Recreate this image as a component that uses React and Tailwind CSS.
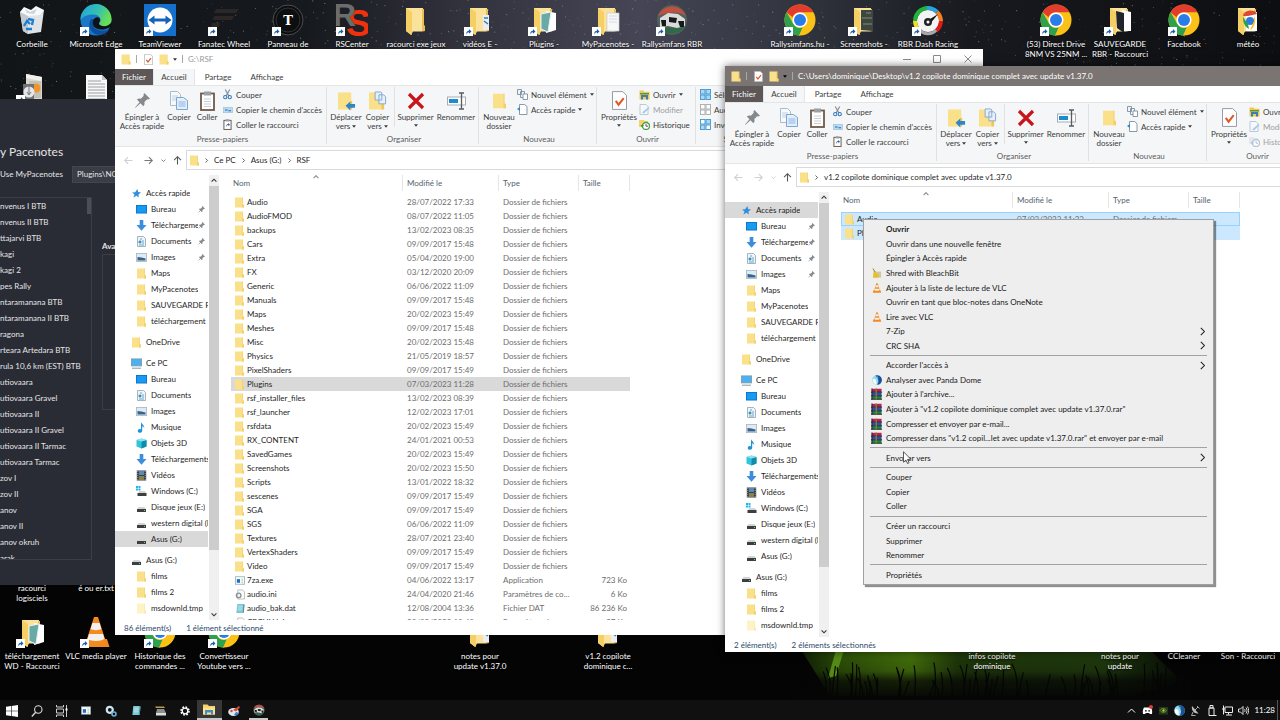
import clsx from "clsx";

const Folder = ({ className = "w-[9px] h-[11px]", pale = false }) => (
  <svg viewBox="0 0 9 11" className={clsx("shrink-0", className)}>
    <path d="M0 .5h7.400v7.200H9V10.500H0z" fill={pale ? "#fdf3c4" : "#fbe08a"} />
    <path d="M8 .5v6.500l1 .7V10.500H7.200V.5z" fill={pale ? "#f8e9ae" : "#f3cf66"} />
  </svg>
);

const BigFolder = ({ children }) => (
  <svg viewBox="0 0 32 32" className="w-8 h-8">
    <path d="M6 4h17v19h2v4l-3 .5H13L11 31 6 27z" fill="#fbe29a" />
    <path d="M6 4l6 4v23l-6-4z" fill="#f5cf63" />
    <path d="M22 5v22h3v-5l-1-1V5z" fill="#e9bf55" />
    {children}
  </svg>
);

const Shortcut = () => (
  <svg viewBox="0 0 9 9" className="absolute left-0 bottom-0 w-[9px] h-[9px]">
    <rect width="9" height="9" fill="#fff" />
    <path d="M2.300 7.600C2 5.200 3 3.700 5 3.500V2l2.500 2.400L5 6.700V5.200C3.800 5.200 2.900 6 2.300 7.600z" fill="#1d5fae" />
  </svg>
);

const Chrome = () => (
  <svg viewBox="0 0 32 32" className="w-8 h-8">
    <circle cx="16" cy="16" r="15.500" fill="#fbc116" />
    <path d="M2.600 8.200A15.500 15.500 0 0 1 29.400 8.200H16a8 8 0 0 0-7.500 5z" fill="#e33b2e" />
    <path d="M2.600 8.200 9.200 19.800A8 8 0 0 0 18.500 23.500L15.500 31.500A15.500 15.500 0 0 1 2.600 8.200z" fill="#2da14c" />
    <path d="M22.800 20 16 31.500 15 31.400 19 23.400z" fill="#fbc116" />
    <circle cx="16" cy="16" r="7.600" fill="#fff" />
    <circle cx="16" cy="16" r="6" fill="#2a7de9" />
  </svg>
);

const Bin = () => (
  <svg viewBox="0 0 32 32" className="w-8 h-8">
    <path d="M4 8 28 6 25 28 12 30 7 27z" fill="#dfe3e6" />
    <path d="M4 8 12 10 12 30 7 27z" fill="#c3c9cd" />
    <path d="M4 8l4-5 7 3 5-4 8 4-4 5-12 1z" fill="#f6f8f9" />
    <path d="M9 5l5 3 7-3-3 5-7-1z" fill="#cdd3d7" />
    <path d="M8 22l3-5 3 3M12 15l5 1-1 5M16 25l-6 0" stroke="#1c7fd0" strokeWidth="2.400" fill="none" />
  </svg>
);

const Edge = () => (
  <svg viewBox="0 0 32 32" className="w-8 h-8">
    <defs>
      <linearGradient id="edgeTop" x1="0" x2="1" y1="0" y2=".4">
        <stop offset="0" stopColor="#1ea4df" />
        <stop offset=".6" stopColor="#35c1b0" />
        <stop offset="1" stopColor="#6adf52" />
      </linearGradient>
    </defs>
    <circle cx="16" cy="16" r="15.500" fill="#1a78c8" />
    <path d="M.5 16A15.500 15.500 0 0 1 31.500 15c.3 5-4 8-9 7.500-4-.4-4-2-2.500-4 2-3-1-8-6-8C8 10.500 3 12 .5 16z" fill="url(#edgeTop)" />
    <path d="M11 15c-4 6-1 15 8 16 5 0 9-3 10.500-6-6 3-15 2-16-4-.4-3 1-5 2-6z" fill="#0d4f9c" />
    <path d="M14.500 14.500c-3 3-2 8 2 10 4 2 10 1 13.500-1.500l1 .5 1-5.500c-3 4-8 5-11 3.500-3-1-2-3-1-4.500 1-3-3-5-5.500-2.500z" fill="#101316" />
  </svg>
);

const TeamViewer = () => (
  <svg viewBox="0 0 32 32" className="w-8 h-8">
    <rect width="32" height="32" fill="#1570cd" />
    <circle cx="16" cy="16" r="12.500" fill="#fff" />
    <path d="M4.500 16l6-4.500v3h11v-3l6 4.500-6 4.500v-3h-11v3z" fill="#1464b8" />
  </svg>
);

const Fanatec = () => (
  <svg viewBox="0 0 32 32" className="w-8 h-8">
    <path d="M8 5h23l-3 4H6zM6 12h20l-2 4H5zM4 19h8l-1 4H3z" fill="#2b2727" />
  </svg>
);

const WheelT = () => (
  <svg viewBox="0 0 32 32" className="w-8 h-8">
    <circle cx="16" cy="16" r="15" fill="#0d0e10" stroke="#4c4e50" />
    <circle cx="16" cy="16" r="12" fill="none" stroke="#303234" />
    <text x="16" y="21" textAnchor="middle" fontSize="13" fontWeight="bold" fontFamily="DejaVu Serif, serif" fill="#fff">T</text>
  </svg>
);

const RsCenter = () => (
  <svg viewBox="0 0 32 32" className="w-8 h-8">
    <text x="10" y="32" fontSize="37" fontWeight="bold" fontFamily="Liberation Sans, sans-serif" fill="#f0310c">S</text>
    <text x="-3" y="22" fontSize="32" fontWeight="bold" fontFamily="Liberation Sans, sans-serif" fill="#6c6c6c">R</text>
  </svg>
);

const Rally = () => (
  <svg viewBox="0 0 32 32" className="w-8 h-8">
    <circle cx="16" cy="16" r="15" fill="#55605c" />
    <path d="M2 12a15 15 0 0 1 28 0c-8-5-18-4-28 0z" fill="#c2503f" />
    <path d="M3 22a15 15 0 0 0 26 0c-8 3-18 3-26 0z" fill="#2e6a4a" />
    <path d="M4 14l8-5 10 1 7 5v7l-8 2-9-2-8 1z" fill="#d9dcda" />
    <path d="M5 16h5v6H6zM13 13l8 1-1 5-7-1zM22 17h6v6h-4z" fill="#17191a" />
  </svg>
);

const Dash = () => (
  <svg viewBox="0 0 32 32" className="w-8 h-8">
    <circle cx="16" cy="17" r="11" fill="#f3f3f3" />
    <g fill="none" strokeWidth="4">
      <path d="M3 17A13 13 0 0 1 15 4" stroke="#20b43c" />
      <path d="M15 4a13 13 0 0 1 10 4" stroke="#27a3e0" />
      <path d="M25 8a13 13 0 0 1 4 9" stroke="#f08020" />
      <path d="M29 17a13 13 0 0 1-5 10" stroke="#e01818" />
      <path d="M3 17a13 13 0 0 0 3 8" stroke="#f2e020" />
    </g>
    <path d="M8 26c4 5 12 5 16 0" stroke="#a8a8a8" strokeWidth="3" fill="none" />
    <path d="M15 17l11-7-8 10z" fill="#111" />
    <circle cx="16" cy="18" r="4" fill="#222" />
    <circle cx="16" cy="18" r="1.500" fill="#fff" />
  </svg>
);

const Cone = ({ className = "w-8 h-8" }) => (
  <svg viewBox="0 0 32 32" className={clsx("shrink-0", className)}>
    <path d="M5 23h22l2.500 8h-27z" fill="#f18a1c" />
    <path d="M14 1h4l8 25c-5 3-15 3-20 0z" fill="#f58a1f" />
    <path d="M12.400 7h7.200l1.800 6c-3 1.500-8 1.500-10.800 0zM9 18h14l1.500 5c-4 2.500-13 2.500-17 0z" fill="#f3f1ee" />
  </svg>
);

const TextFile = () => (
  <svg viewBox="0 0 32 32" className="w-8 h-8">
    <path d="M6 3h16l5 5v24H6z" fill="#f8f8f8" />
    <path d="M22 3v5h5z" fill="#c4c4c4" />
    <path d="M8 9h13M8 12h17M8 15h17M8 18h17M8 21h17M8 24h17M8 27h17" stroke="#9aa0a4" />
  </svg>
);

const Installer = () => (
  <svg viewBox="0 0 32 32" className="w-8 h-8">
    <path d="M10 2l16 3v23H10z" fill="#d9d6ce" />
    <path d="M10 2l16 3-1 4-15-3z" fill="#f2f1ec" />
    <path d="M13 9h12v17H13z" fill="#c4c1b8" />
    <circle cx="20" cy="16" r="4.500" fill="#f0952c" />
    <path d="M7 12h11v18H7z" fill="#6e7275" />
    <circle cx="13" cy="20" r="5.500" fill="#e4e6e8" />
    <path d="M13 14v8M11 20l2 3 2-3" stroke="#777" fill="none" />
  </svg>
);

const FolderDoc = () => (
  <BigFolder>
    <path d="M15 9h12v18H15z" fill="#f6f7f8" stroke="#c9cdd0" strokeWidth=".7" />
    <path d="M17 12h8M17 15h8M17 18h8" stroke="#d7dbdf" />
  </BigFolder>
);
const FolderPhoto = () => (
  <BigFolder>
    <path d="M18 7l10 2v17l-10 3z" fill="#fff" />
    <path d="M13 10l10-2-3 20-7-3z" fill="#67aaa8" stroke="#eee" />
  </BigFolder>
);
const FolderClip = () => (
  <BigFolder>
    <path d="M19 11h6v15h-6z" fill="#e9eef2" />
    <path d="M20 14h4M20 17l4 3" stroke="#2a7bbd" strokeWidth="1.500" />
  </BigFolder>
);
const FolderShots = () => (
  <BigFolder>
    <path d="M13 6h12v21l-12-1z" fill="#3d4740" />
    <path d="M14 14h10M15 20h9M18 9h5" stroke="#5f6b58" strokeWidth="2" />
  </BigFolder>
);
const FolderSave = () => (
  <BigFolder>
    <path d="M18 6l9 2v19h-9z" fill="#fff" />
    <path d="M12 7l8 2v20l-7-5z" fill="#22242c" />
  </BigFolder>
);
const FolderMeteo = () => (
  <BigFolder>
    <path d="M14 8h11v19H14z" fill="#fff" />
    <path d="M11 12c0-6 12-8 14-2l-9 2z" fill="#de4a30" />
    <circle cx="18" cy="17" r="4" fill="#2c7be0" />
    <path d="M11 13c0 8 3 10 6 12l-1-5z" fill="#2da14c" />
    <path d="M22 12c3 5 0 12-4 14l4-9z" fill="#fbc116" />
  </BigFolder>
);

const desktopIcons = [
  { col: 1, row: 1, label: "Corbeille", Icon: Bin },
  { col: 2, row: 1, label: "Microsoft Edge", Icon: Edge, link: true },
  { col: 3, row: 1, label: "TeamViewer", Icon: TeamViewer, link: true },
  { col: 4, row: 1, label: "Fanatec Wheel", Icon: Fanatec, link: true },
  { col: 5, row: 1, label: "Panneau de", Icon: WheelT, link: true },
  { col: 6, row: 1, label: "RSCenter", Icon: RsCenter, link: true },
  { col: 7, row: 1, label: "racourci exe jeux", Icon: BigFolder },
  { col: 8, row: 1, label: "vidéos E -", Icon: FolderClip, link: true },
  { col: 9, row: 1, label: "Plugins -", Icon: FolderPhoto, link: true },
  { col: 10, row: 1, label: "MyPacenotes -", Icon: FolderDoc, link: true },
  { col: 11, row: 1, label: "Rallysimfans RBR", Icon: Rally, link: true },
  { col: 13, row: 1, label: "Rallysimfans.hu -", Icon: Chrome, link: true },
  { col: 14, row: 1, label: "Screenshots -", Icon: FolderShots, link: true },
  { col: 15, row: 1, label: "RBR Dash Racing", Icon: Dash, link: true },
  { col: 17, row: 1, label: "(53) Direct Drive\n8NM VS 25NM ...", Icon: Chrome, link: true },
  { col: 18, row: 1, label: "SAUVEGARDE\nRBR - Raccourci", Icon: FolderSave, link: true },
  { col: 19, row: 1, label: "Facebook", Icon: Chrome, link: true },
  { col: 20, row: 1, label: "météo", Icon: FolderMeteo },
  { col: 1, row: 2, label: "", Icon: Installer, link: true },
  { col: 2, row: 2, label: "", Icon: TextFile },
  { col: 1, row: 9, label: "racourci\nlogisciels", Icon: BigFolder },
  { col: 2, row: 9, label: "é ou er.txt", Icon: TextFile },
  { col: 1, row: 10, label: "téléchargement\nWD - Raccourci", Icon: FolderPhoto, link: true },
  { col: 2, row: 10, label: "VLC media player", Icon: Cone, link: true },
  { col: 3, row: 10, label: "Historique des\ncommandes ...", Icon: Chrome, link: true },
  { col: 4, row: 10, label: "Convertisseur\nYoutube vers ...", Icon: Chrome, link: true },
  { col: 8, row: 10, label: "notes pour\nupdate v1.37.0", Icon: FolderClip },
  { col: 10, row: 10, label: "v1.2 copilote\ndominique c...", Icon: FolderClip },
  { col: 16, row: 10, label: "infos copilote\ndominique", Icon: FolderDoc },
  { col: 18, row: 10, label: "notes pour\nupdate", Icon: FolderDoc },
  { col: 19, row: 10, label: "CCleaner", Icon: BigFolder },
  { col: 20, row: 10, label: "Son - Raccourci", Icon: BigFolder },
];

// cheap deterministic noise so the sky is the same on every load
const noise = (n) => {
  const v = Math.sin(n * 12.9898) * 43758.5453;
  return v - Math.floor(v);
};

const stars = Array.from({ length: 900 }, (_, i) => ({
  x: noise(i + 1) * 1280,
  y: noise(i + 5000) * 100,
  o: 0.08 + noise(i + 9000) * 0.3,
}));

const grass = Array.from({ length: 70 }, (_, i) => {
  const x = 795 + noise(i + 70) * 390;
  const y = 662 + noise(i + 700) * 20;
  return `M${x} 698Q${x + 2} ${y + 12} ${x + noise(i) * 12 - 6} ${y}`;
}).join("");

const Wallpaper = () => (
  <svg viewBox="0 0 1280 700" preserveAspectRatio="none" className="absolute inset-0 w-full h-full">
    <defs>
      <linearGradient id="sky">
        <stop offset="0" stopColor="#111517" />
        <stop offset=".24" stopColor="#16191e" />
        <stop offset=".36" stopColor="#32323d" />
        <stop offset=".5" stopColor="#454555" />
        <stop offset=".62" stopColor="#32353f" />
        <stop offset=".76" stopColor="#17191e" />
        <stop offset="1" stopColor="#0c0e11" />
      </linearGradient>
      <linearGradient id="field">
        <stop offset="0" stopColor="#0c1c06" />
        <stop offset=".12" stopColor="#2f5208" />
        <stop offset=".3" stopColor="#46740c" />
        <stop offset=".42" stopColor="#20390a" />
        <stop offset=".8" stopColor="#203c0e" />
        <stop offset="1" stopColor="#070c05" />
      </linearGradient>
      <linearGradient id="ground" x2="0" y2="1">
        <stop offset="0" stopColor="#050505" stopOpacity="0" />
        <stop offset=".4" stopColor="#050505" stopOpacity=".2" />
        <stop offset=".6" stopColor="#050505" stopOpacity=".75" />
        <stop offset="1" stopColor="#050505" />
      </linearGradient>
    </defs>
    <rect width="1280" height="700" fill="#040404" />
    <rect width="1280" height="300" fill="url(#sky)" />
    {stars.map((s, i) => (
      <circle key={i} cx={s.x} cy={s.y} r=".6" fill="#fff" opacity={s.o} />
    ))}
    <path d="M795 640h345l42 42-50 14H830z" fill="url(#field)" />
    <rect x="790" y="652" width="400" height="48" fill="url(#ground)" />
    <path d="M836 650h8l-8 26-8 2z" fill="#558a16" />
    <path d={grass} stroke="#040604" strokeWidth="1.200" fill="none" />
  </svg>
);

const stages = [
  "nvenus I BTB", "nvenus II BTB", "ttajarvi BTB", "kagi", "kagi 2", "pes Rally",
  "ntaramanana BTB", "ntaramanana II BTB", "ragona", "rteara Artedara BTB",
  "rula 10,6 km (EST) BTB", "utiovaara", "utiovaara Gravel", "utiovaara II",
  "utiovaara II Gravel", "utiovaara II Tarmac", "utiovaara Tarmac", "zov I", "zov II",
  "anov", "anov II", "anov okruh", "arak",
];

const PacenotesApp = () => (
  <section className="absolute left-0 top-[99px] w-[200px] h-[486px] bg-[#2a2c35] text-[#e4e4e6] overflow-hidden">
    <h2 className="mt-[45px] text-[12px] leading-4">y Pacenotes</h2>
    <div className="mt-[5px] flex items-center h-[18px]">
      <label htmlFor="pluginDir" className="w-[72px]">Use MyPacenotes</label>
      <input
        id="pluginDir"
        defaultValue="Plugins\NGPCarMenu"
        className="flex-1 h-[17px] px-[4px] bg-[#3a3c46] border border-[#44464f] outline-none"
      />
    </div>
    <div className="mt-[14px] flex gap-[10px]">
      <div className="flex w-[92px] h-[363px] border border-l-0 border-[#3b3d47] overflow-hidden">
        <ul className="flex-1 whitespace-nowrap">
          {stages.map((s) => (
            <li key={s} className="h-4 leading-4">{s}</li>
          ))}
        </ul>
        <div className="w-[4px] h-[16px] bg-[#4b4d58]" />
      </div>
      <div className="flex-1">
        <p className="mt-[41px] h-4 leading-4 font-bold">Available</p>
        <div className="h-[156px] border border-[#3b3d47]" />
      </div>
    </div>
  </section>
);

// navigation pane icons
const Star = () => (
  <svg viewBox="0 0 10 10" className="w-[9px] h-[9px] shrink-0">
    <path d="M6 0l.8 3.300L10 4 7.200 6l.3 3.500L5 7.500 1.500 9.500 2.800 6 0 4l3.500-.3z" fill="#2f8fdc" />
  </svg>
);
const Monitor = () => (
  <svg viewBox="0 0 11 9" className="w-[11px] h-[9px] shrink-0">
    <rect width="11" height="8.500" fill="#0f6fc6" />
    <rect x=".8" y=".8" width="9.400" height="6.800" fill="#169bf2" />
  </svg>
);
const Down = () => (
  <svg viewBox="0 0 11 11" className="w-[11px] h-[11px] shrink-0">
    <path d="M3.700 0h3.600v5H10.500L5.500 10.800.5 5h3.200z" fill="#3c8edb" />
  </svg>
);
const Doc = () => (
  <svg viewBox="0 0 11 11" className="w-[11px] h-[11px] shrink-0">
    <path d="M1.500.5h6l2 2v8h-8z" fill="#eef4f8" stroke="#8fa3b0" strokeWidth=".8" />
    <path d="M3 5h2v2H3zM6 5h2M6 7h2M3 9h5M4 3h2" stroke="#3f93bd" fill="#3f93bd" strokeWidth=".8" />
  </svg>
);
const Pic = () => (
  <svg viewBox="0 0 11 9" className="w-[11px] h-[9px] shrink-0">
    <rect x=".4" y=".4" width="10.200" height="8.200" fill="#dcebf6" stroke="#a5b4bf" strokeWidth=".8" />
    <path d="M1.500 4l4 .5 4 1v2h-8z" fill="#3a6386" />
  </svg>
);
const Note = () => (
  <svg viewBox="0 0 11 11" className="w-[11px] h-[11px] shrink-0">
    <path d="M5 0c.5 2 3.500 3 3.200 6.500C7.800 5 7 4.500 6.200 4.300V9A2.200 1.800 0 1 1 5 7.300z" fill="#1e93d6" />
  </svg>
);
const Cube = () => (
  <svg viewBox="0 0 11 11" className="w-[11px] h-[11px] shrink-0">
    <path d="M.5 2l5-1.500 5 1.500v6.500l-5 2-5-2z" fill="#35c3dc" />
    <path d="M5.500 3.500L10.500 2v6.500l-5 2z" fill="#118ba8" />
    <path d="M.5 2l5-1.500 5 1.500-5 1.500z" fill="#8be4f2" />
  </svg>
);
const Film = () => (
  <svg viewBox="0 0 11 11" className="w-[11px] h-[11px] shrink-0">
    <rect x=".8" y=".5" width="9.400" height="10" fill="#3a4048" />
    <path d="M3 1h5v4H3z" fill="#5989b4" />
    <path d="M3 6h5v4H3z" fill="#87814c" />
    <path d="M1.800 1v9M9.200 1v9" stroke="#c8ccd0" strokeWidth=".7" strokeDasharray="1 1" />
  </svg>
);
const Disk = () => (
  <svg viewBox="0 0 11 11" className="w-[11px] h-[11px] shrink-0">
    <path d="M2.500 5h6l1.500 2H1z" fill="#d3d5d7" />
    <rect x="1" y="7" width="9" height="3" fill="#3b3f42" />
    <rect x="8" y="8" width="1" height="1" fill="#72d272" />
  </svg>
);
const WinDisk = () => (
  <svg viewBox="0 0 11 11" className="w-[11px] h-[11px] shrink-0">
    <path d="M0 0h2v2H0zM2.500 0h2v2h-2zM0 2.500h2v2H0zM2.500 2.500h2v2h-2z" fill="#23b4e8" />
    <path d="M3 5h6l1.500 2.500H2z" fill="#d3d5d7" />
    <rect x="1.500" y="7" width="9" height="3" fill="#3b3f42" />
  </svg>
);
const Computer = () => (
  <svg viewBox="0 0 11 11" className="w-[11px] h-[11px] shrink-0">
    <rect x=".4" y=".9" width="10.200" height="7" fill="#4ab2f0" stroke="#7f98a8" strokeWidth=".8" />
    <path d="M1 10.200h9" stroke="#8798a4" />
  </svg>
);
const Pin = ({ className = "w-[7px] h-[7px]" }) => (
  <svg viewBox="0 0 16 16" className={clsx("shrink-0", className)}>
    <path d="M10 0l6 6-2 1-1-.3-3 3c.5 2 0 3.500-1 4.300L5.800 10.800.5 15.700 0 15.500 4.800 9.800 2 7c1-1 2.500-1.500 4.300-1l3-3L9 1.500z" fill="#84898e" />
  </svg>
);

const navItems = [
  { label: "Accès rapide", Icon: Star, root: true },
  { label: "Bureau", Icon: Monitor, pin: true },
  { label: "Téléchargements", Icon: Down, pin: true },
  { label: "Documents", Icon: Doc, pin: true },
  { label: "Images", Icon: Pic, pin: true },
  { label: "Maps", Icon: Folder },
  { label: "MyPacenotes", Icon: Folder },
  { label: "SAUVEGARDE RBR", Icon: Folder },
  { label: "téléchargement", Icon: Folder },
  { label: "OneDrive", Icon: Folder, root: true, gap: true },
  { label: "Ce PC", Icon: Computer, root: true, gap: true },
  { label: "Bureau", Icon: Monitor },
  { label: "Documents", Icon: Doc },
  { label: "Images", Icon: Pic },
  { label: "Musique", Icon: Note },
  { label: "Objets 3D", Icon: Cube },
  { label: "Téléchargements", Icon: Down },
  { label: "Vidéos", Icon: Film },
  { label: "Windows (C:)", Icon: WinDisk },
  { label: "Disque jeux (E:)", Icon: Disk },
  { label: "western digital (F:)", Icon: Disk },
  { label: "Asus (G:)", Icon: Disk },
  { label: "Asus (G:)", Icon: Disk, root: true, gap: true },
  { label: "films", Icon: Folder },
  { label: "films 2", Icon: Folder },
  { label: "msdownld.tmp", Icon: Folder, pale: true },
];

const NavPane = ({ selected }) => (
  <nav className="flex w-[104px] shrink-0 overflow-hidden">
    <ul className="w-[93px] pt-[10px]">
      {navItems.map(({ label, Icon, root, gap, pin, pale }, i) => (
        <li
          key={i}
          className={clsx(
            "h-4 flex items-center overflow-hidden whitespace-nowrap",
            root ? "pl-[16px]" : "pl-[21px]",
            gap && "mt-[5px]",
            i === selected && "bg-[#d9d9d9]"
          )}
        >
          <span className="w-[11px] flex justify-center shrink-0">
            {pale ? <Folder pale /> : <Icon />}
          </span>
          <span className={clsx("pl-[4px] overflow-hidden", pin && "w-[51px]")}>{label}</span>
          {pin && <Pin />}
        </li>
      ))}
    </ul>
    <div className="w-[10px] ml-[1px] bg-[#f0f0f0] flex flex-col items-center">
      <Chevron className="w-[6px] h-[11px] rotate-180 text-[#333]" />
      <div className="w-full h-[364px] bg-[#cdcdcd]" />
      <Chevron className="mt-auto w-[6px] h-[11px] text-[#333]" />
    </div>
  </nav>
);

const Chevron = ({ className, thin }) => (
  <svg viewBox="0 0 8 8" className={className}>
    <path d="M.8 2.500 4 5.700 7.200 2.500" fill="none" stroke="currentColor" strokeWidth={thin ? 0.9 : 1.5} />
  </svg>
);

const Caret = ({ className }) => (
  <svg viewBox="0 0 6 4" className={clsx("inline-block w-[4px] h-[3px] shrink-0", className)}>
    <path d="M0 0h6L3 4z" fill="currentColor" />
  </svg>
);

const CheckDoc = ({ className }) => (
  <svg viewBox="0 0 16 20" className={className}>
    <path d="M.5.5h11l4 4v15H.5z" fill="#fff" stroke="#8e959a" />
    <path d="M4 10.500l3 4 5.500-7" fill="none" stroke="#e0592a" strokeWidth="2.200" />
  </svg>
);

// ribbon icons
const CopyIcon = () => (
  <svg viewBox="0 0 18 20" className="w-[18px] h-[20px]">
    <path d="M.5.5h7l3 3v11H.5z" fill="#f7fafd" stroke="#a9bccb" />
    <path d="M2 5h6M2 7h6M2 9h6" stroke="#bcd0e2" />
    <path d="M6.500 6.500h7l4 3v9h-11z" fill="#e3eefb" stroke="#7fa6cf" />
    <path d="M8.500 11h7M8.500 13h7M8.500 15h7" stroke="#8fb5e6" />
  </svg>
);
const PasteIcon = ({ className = "w-[15px] h-[20px]", link = false }) => (
  <svg viewBox="0 0 15 20" className={className}>
    <rect x="1" y="2.500" width="13" height="16.500" fill="#fff" stroke="#6e5a4b" strokeWidth="1.800" />
    <rect x="4" y=".5" width="7" height="4" fill="#9aa0a5" />
    {link ? (
      <path d="M5 15c0-4 1-6 4-6V7l3 3.500L9 13v-2c-2 0-3 1-4 4z" fill="#2566b4" />
    ) : (
      <path d="M4 8h7M4 10.500h7M4 13h7M4 15.500h7" stroke="#c8ced3" />
    )}
  </svg>
);
const Scissors = () => (
  <svg viewBox="0 0 10 11" className="w-[9px] h-[11px]">
    <path d="M2.500 0l4 7M7.500 0l-4 7" stroke="#8a9299" strokeWidth="1.300" />
    <circle cx="2.500" cy="8.500" r="1.800" fill="none" stroke="#2f78c0" strokeWidth="1.200" />
    <circle cx="7.500" cy="8.500" r="1.800" fill="none" stroke="#2f78c0" strokeWidth="1.200" />
  </svg>
);
const PathIcon = () => (
  <svg viewBox="0 0 11 7" className="w-[10px] h-[6px]">
    <rect x=".4" y=".4" width="10.200" height="6.200" fill="#b8dcf3" stroke="#9cc0d8" strokeWidth=".8" />
    <path d="M2 3.500h3M6 4.500h3" stroke="#2268a8" fill="none" strokeWidth="1.200" />
  </svg>
);
const MoveTo = () => (
  <svg viewBox="0 0 20 20" className="w-[19px] h-[20px]">
    <path d="M1 1h14v18H1z" fill="#fbe08a" />
    <path d="M14 10h2v9h-2z" fill="#efc658" />
    <path d="M9 15l5-4.500v2.700h5v4h-5v2.700z" fill="#2f86c6" />
  </svg>
);
const CopyTo = () => (
  <svg viewBox="0 0 20 20" className="w-[19px] h-[20px]">
    <path d="M1 1h13v18H1z" fill="#fbe08a" />
    <path d="M14 10h3v9h-3z" fill="#efc658" />
    <path d="M7.500.5h6l1 1V9h-7zM11.500 3.500h5l2 2V13h-7z" fill="#e6f0fb" stroke="#84a8cc" />
  </svg>
);
const Cross = () => (
  <svg viewBox="0 0 18 18" className="w-[18px] h-[18px]">
    <path d="M2 2l14 14M16 2 2 16" stroke="#c8151b" strokeWidth="3.200" />
  </svg>
);
const Rename = () => (
  <svg viewBox="0 0 19 18" className="w-[19px] h-[18px]">
    <rect x=".5" y="5" width="18" height="8" fill="#fff" stroke="#a3adb5" />
    <rect x="2" y="7" width="9" height="4" fill="#1f8ad0" />
    <path d="M12 1h5M12 17h5M14.500 1v16" stroke="#565c61" strokeWidth="1.300" />
  </svg>
);
const NewItem = () => (
  <svg viewBox="0 0 11 11" className="w-[11px] h-[11px]">
    <path d="M.5.5h4v5h-4zM3.500 2.500h4v6h-4z" fill="#eef5fb" stroke="#7d8f9e" strokeWidth=".9" />
    <path d="M6 5h4.500v5.500H6z" fill="#fff" stroke="#7d8f9e" strokeWidth=".9" />
  </svg>
);
const EasyAccess = () => (
  <svg viewBox="0 0 11 11" className="w-[11px] h-[11px]">
    <path d="M2.500.5h5l2.500 2v8H2.500z" fill="#fff" stroke="#7d8f9e" strokeWidth=".9" />
    <path d="M0 5l3-2v4z" fill="#2f86c6" />
  </svg>
);
const OpenIcon = () => (
  <svg viewBox="0 0 11 10" className="w-[11px] h-[10px]">
    <path d="M.5.5h4l1 1.200h5V9.500H.5z" fill="#f3c84b" />
    <path d="M2 5h7v4.500H7V7H4v2.500H2z" fill="#3a7fb7" />
    <path d="M1 3h9v1.500H1z" fill="#4c9a57" />
  </svg>
);
const EditIcon = () => (
  <svg viewBox="0 0 11 11" className="w-[11px] h-[11px]">
    <path d="M1 .5h6l2 2v8H1z" fill="#f6f9fc" stroke="#b4c4d2" strokeWidth=".9" />
    <path d="M3 8.500 9.500 3l1 1L5 9.500z" fill="#a9c9e6" />
  </svg>
);
const HistoryIcon = ({ dim }) => (
  <svg viewBox="0 0 11 11" className="w-[11px] h-[11px]">
    <path d="M0 1h5l1 1h3v6H0z" fill={dim ? "#e4e8ec" : "#f3d36a"} />
    <circle cx="7" cy="7" r="3.500" fill="#fff" stroke={dim ? "#b3c3d8" : "#4a9e4a"} strokeWidth="1.300" />
    <path d="M7 5v2.200h2" stroke={dim ? "#9db2cc" : "#333"} fill="none" strokeWidth=".8" />
    <path d="M1.500 6 5 6 3.200 9z" fill={dim ? "#b3c3d8" : "#3c9f3c"} />
  </svg>
);
const SelectIcon = ({ kind }) => {
  const on = "#a9d8f7";
  const off = "#fdfdfd";
  const fills = kind === "all" ? [on, on, on, on] : kind === "none" ? [off, off, off, off] : [off, on, on, off];
  return (
    <svg viewBox="0 0 11 11" className="w-[11px] h-[11px]">
      {fills.map((f, i) => (
        <rect
          key={i}
          x={0.5 + (i % 2) * 5.5}
          y={0.5 + Math.floor(i / 2) * 5.5}
          width="4.500"
          height="4.500"
          fill={f}
          stroke={kind === "none" ? "#a8a8a8" : "#3d96cf"}
          strokeWidth=".9"
        />
      ))}
    </svg>
  );
};

const BigButton = ({ icon, lines, caret, className }) => (
  <button className={clsx("flex flex-col items-center text-center leading-[9px]", className)}>
    <span className="h-[21px] mb-[2px] flex items-center">{icon}</span>
    {lines.map((l, i) => (
      <span key={l} className="h-[9px] whitespace-nowrap flex items-center">
        {l}
        {caret && lines.length > 1 && i === 1 && <Caret className="ml-[2px]" />}
      </span>
    ))}
    {caret && lines.length === 1 && <Caret className="mt-[2px]" />}
  </button>
);

const SmallButton = ({ icon, label, caret, dim }) => (
  <button className={clsx("flex items-center h-[15px] whitespace-nowrap", dim && "text-[#a0a0a0]")}>
    <span className="w-[11px] mr-[3px] flex justify-center">{icon}</span>
    {label}
    {caret && <Caret className="ml-[3px]" />}
  </button>
);

const Group = ({ label, className, children }) => (
  <div className={clsx("shrink-0 h-[57px] flex flex-col border-r border-[#dfe1e3]", className)}>
    <div className="flex flex-1">{children}</div>
    <div className="h-[10px] leading-[10px] text-center text-[#5c5c5c]">{label}</div>
  </div>
);

const Ribbon = ({ historyDim }) => (
  <div className="h-[62px] shrink-0 bg-[#f5f6f7] border-y border-[#e3e5e7] pt-[1px] flex text-[#3c3c3c] overflow-hidden">
    <Group label="Presse-papiers" className="w-[212px] pl-[4px]">
      <BigButton className="w-[46px] pt-[3px]" icon={<Pin className="w-[15px] h-[15px]" />} lines={["Épingler à", "Accès rapide"]} />
      <BigButton className="w-[28px] pt-[3px]" icon={<CopyIcon />} lines={["Copier"]} />
      <BigButton className="w-[28px] pt-[3px]" icon={<PasteIcon />} lines={["Coller"]} />
      <div className="ml-[1px]">
        <SmallButton icon={<Scissors />} label="Couper" />
        <SmallButton icon={<PathIcon />} label="Copier le chemin d'accès" />
        <SmallButton icon={<PasteIcon link className="w-[9px] h-[11px]" />} label="Coller le raccourci" />
      </div>
    </Group>
    <Group label="Organiser" className="w-[152px] pl-[3px]">
      <BigButton className="w-[32px] pt-[3px]" icon={<MoveTo />} lines={["Déplacer", "vers"]} caret />
      <BigButton className="w-[31px] pt-[3px] mr-[1px]" icon={<CopyTo />} lines={["Copier", "vers"]} caret />
      <div className="h-[40px] border-r border-[#dfe1e3]" />
      <BigButton className="w-[41px] pt-[3px]" icon={<Cross />} lines={["Supprimer"]} caret />
      <BigButton className="w-[40px] pt-[3px]" icon={<Rename />} lines={["Renommer"]} />
    </Group>
    <Group label="Nouveau" className="w-[118px] pl-[3px]">
      <BigButton className="w-[34px] pt-[3px]" icon={<Folder className="w-[13px] h-[18px]" />} lines={["Nouveau", "dossier"]} />
      <div className="ml-[1px]">
        <SmallButton icon={<NewItem />} label="Nouvel élément" caret />
        <SmallButton icon={<EasyAccess />} label="Accès rapide" caret />
      </div>
    </Group>
    <Group label="Ouvrir" className="w-[99px] pl-[3px]">
      <BigButton className="w-[38px] pt-[3px]" icon={<CheckDoc className="w-[15px] h-[19px]" />} lines={["Propriétés"]} caret />
      <div className="ml-[1px]">
        <SmallButton icon={<OpenIcon />} label="Ouvrir" caret />
        <SmallButton icon={<EditIcon />} label="Modifier" dim />
        <SmallButton icon={<HistoryIcon dim={historyDim} />} label="Historique" dim={historyDim} />
      </div>
    </Group>
    <Group label="Sélectionner" className="w-[96px] pl-[4px]">
      <div>
        <SmallButton icon={<SelectIcon kind="all" />} label="Sélectionner tout" />
        <SmallButton icon={<SelectIcon kind="none" />} label="Aucun" />
        <SmallButton icon={<SelectIcon kind="invert" />} label="Inverser la sélection" />
      </div>
    </Group>
  </div>
);

const Arrow = ({ className }) => (
  <svg viewBox="0 0 10 10" className={clsx("w-[9px] h-[9px]", className)}>
    <path d="M9.500 5H1M4.500 1.200.8 5l3.700 3.800" fill="none" stroke="currentColor" strokeWidth="1.200" />
  </svg>
);

const AddressBar = ({ crumbs, canForward }) => (
  <div className="h-[26px] mb-[2px] shrink-0 flex items-center">
    <button aria-label="Précédent" className="ml-[9px] text-[#d0d0d0]"><Arrow /></button>
    <button aria-label="Suivant" className={clsx("ml-[11px]", canForward ? "text-[#777]" : "text-[#d0d0d0]")}>
      <Arrow className="rotate-180" />
    </button>
    <button aria-label="Récents" className={clsx("ml-[8px]", canForward ? "text-[#777]" : "text-[#d0d0d0]")}>
      <Chevron className="w-[5px] h-[5px]" />
    </button>
    <button aria-label="Dossier parent" className="ml-[7px] text-[#555]"><Arrow className="rotate-90" /></button>
    <div className="ml-[4px] flex-1 h-[20px] border border-r-0 border-[#d9d9d9] flex items-center pl-[3px] whitespace-nowrap">
      <Folder className="w-[9px] h-[11px]" />
      {crumbs.map((c) => (
        <span key={c} className="flex items-center">
          <Chevron className="w-[5px] h-[5px] -rotate-90 mx-[5px] text-[#555]" />
          <button>{c}</button>
        </span>
      ))}
    </div>
  </div>
);

const ExeIcon = () => (
  <svg viewBox="0 0 11 9" className="w-[10px] h-[9px]">
    <rect x=".4" y=".4" width="10.200" height="8.200" fill="#fff" stroke="#8ba1b3" strokeWidth=".8" />
    <path d="M2 3h3.500v4H2z" fill="#1c6fc4" />
    <path d="M7 3h2M7 5h2M7 7h2" stroke="#7cbf6c" strokeWidth=".8" />
  </svg>
);
const IniIcon = () => (
  <svg viewBox="0 0 11 11" className="w-[10px] h-[11px]">
    <path d="M3 .5h5l2.500 2v8H3z" fill="#fafafa" stroke="#a9adb0" strokeWidth=".8" />
    <circle cx="4" cy="6.500" r="2.500" fill="none" stroke="#8e9396" strokeWidth="1.500" />
  </svg>
);
const DatIcon = () => (
  <svg viewBox="0 0 11 11" className="w-[10px] h-[11px]">
    <path d="M2.500 .5h7l1 1-1 9h-8z" fill="#7cc7d6" />
    <path d="M9.500.5l1 1-1 9-1-1z" fill="#4b8f9c" />
    <path d="M3.500 3h5M3.300 5h5M3 7h5" stroke="#d5f0f5" strokeWidth=".8" />
  </svg>
);

const dir = (name, date) => ({ name, date, type: "Dossier de fichiers" });

const rsfFiles = [
  dir("Audio", "28/07/2022 17:33"),
  dir("AudioFMOD", "08/07/2022 11:05"),
  dir("backups", "13/02/2023 08:35"),
  dir("Cars", "09/09/2017 15:48"),
  dir("Extra", "05/04/2020 19:00"),
  dir("FX", "03/12/2020 20:09"),
  dir("Generic", "06/06/2022 11:09"),
  dir("Manuals", "09/09/2017 15:48"),
  dir("Maps", "20/02/2023 15:49"),
  dir("Meshes", "09/09/2017 15:48"),
  dir("Misc", "20/02/2023 15:48"),
  dir("Physics", "21/05/2019 18:57"),
  dir("PixelShaders", "09/09/2017 15:49"),
  dir("Plugins", "07/03/2023 11:28"),
  dir("rsf_installer_files", "13/02/2023 08:39"),
  dir("rsf_launcher", "12/02/2023 17:01"),
  dir("rsfdata", "20/02/2023 15:49"),
  dir("RX_CONTENT", "24/01/2021 00:53"),
  dir("SavedGames", "20/02/2023 15:49"),
  dir("Screenshots", "20/02/2023 15:50"),
  dir("Scripts", "13/01/2022 18:32"),
  dir("sescenes", "09/09/2017 15:49"),
  dir("SGA", "09/09/2017 15:49"),
  dir("SGS", "06/06/2022 11:09"),
  dir("Textures", "28/07/2021 23:40"),
  dir("VertexShaders", "09/09/2017 15:49"),
  dir("Video", "09/09/2017 15:49"),
  { name: "7za.exe", date: "04/06/2022 13:17", type: "Application", size: "723 Ko", Icon: ExeIcon },
  { name: "audio.ini", date: "24/04/2020 21:46", type: "Paramètres de co...", size: "6 Ko", Icon: IniIcon },
  { name: "audio_bak.dat", date: "12/08/2004 13:36", type: "Fichier DAT", size: "86 236 Ko", Icon: DatIcon },
  { name: "CPCHU.ini", date: "20/02/2023 18:48", type: "Paramètres de co...", size: "27 Ko", Icon: IniIcon },
];

const copiloteFiles = [dir("Audio", "07/03/2023 11:23"), dir("Plugins", "07/03/2023 11:23")];

const FileTable = ({ files, selected, active }) => (
  <div className="relative flex-1 pl-[12px] overflow-hidden">
    <Chevron className="absolute left-[94px] top-[-1px] w-[6px] h-[6px] rotate-180 text-[#888]" />
    <table className="table-fixed w-[399px]">
      <thead>
        <tr className="text-left text-[#56636f]">
          {[
            ["Nom", "w-[172px] pl-[2px]"],
            ["Modifié le", "w-[96px] pl-[4px]"],
            ["Type", "w-[80px] pl-[4px]"],
            ["Taille", "w-[51px] pl-[4px]"],
          ].map(([h, cls]) => (
            <th key={h} className={clsx("h-5 p-0 font-normal align-top", cls)}>
              <div className="h-4 leading-4 border-r border-[#e5e5e5]">{h}</div>
            </th>
          ))}
        </tr>
      </thead>
      <tbody>
        {files.map(({ name, date, type, size, Icon }, i) => (
          <tr
            key={name}
            className={clsx(
              "h-[14px] leading-[14px] whitespace-nowrap text-[#6d6d6d]",
              selected.includes(i) && (active ? "bg-[#cce8ff]" : "bg-[#d9d9d9]"),
              active && i === 0 && "outline outline-1 -outline-offset-1 outline-[#99d1ff]"
            )}
          >
            <td className="p-0 text-[#1f1f1f]">
              <span className="flex items-center">
                <span className="w-[11px] ml-[3px] mr-[2px] flex justify-center">
                  {Icon ? <Icon /> : <Folder />}
                </span>
                {name}
              </span>
            </td>
            <td className="p-0 pl-[4px]">{date}</td>
            <td className="p-0 pl-[4px]">{type}</td>
            <td className="p-0 pr-[3px] text-right">{size}</td>
          </tr>
        ))}
      </tbody>
    </table>
  </div>
);

const Explorer = ({ title, crumbs, files, selected, navSelected, status, active, className }) => (
  <section className={clsx("absolute w-[868px] h-[586px] bg-white text-[#1f1f1f] flex flex-col overflow-hidden", className)}>
    <header
      className={clsx("h-[20px] shrink-0 flex items-center pl-[6px]", active ? "bg-[#7a7573] text-white" : "bg-white text-[#999]")}
    >
      <Folder className="w-[10px] h-[11px]" />
      <span className="ml-[5px] h-2 border-r border-[#a8a8a8]" />
      <CheckDoc className="ml-[7px] w-[9px] h-[11px]" />
      <Folder className="ml-[6px] w-[10px] h-[11px]" />
      <Caret className={clsx("ml-[4px]", active ? "text-black" : "text-[#333]")} />
      <span className="ml-[5px] h-2 border-r border-[#a8a8a8]" />
      <h1 className="ml-[5px] whitespace-nowrap">{title}</h1>
      <div className={clsx("ml-auto flex items-center", active ? "text-white" : "text-[#8a8a8a]")}>
        <button aria-label="Réduire" className="w-[30px] flex justify-center">
          <svg viewBox="0 0 8 8" className="w-2 h-2"><path d="M0 4.500h8" stroke="currentColor" /></svg>
        </button>
        <button aria-label="Agrandir" className="w-[30px] flex justify-center">
          <svg viewBox="0 0 8 8" className="w-2 h-2"><path d="M.5.5h7v7h-7z" fill="none" stroke="currentColor" /></svg>
        </button>
        <button aria-label="Fermer" className="w-[31px] flex justify-center">
          <svg viewBox="0 0 8 8" className="w-2 h-2"><path d="M.5.5l7 7M7.500.5l-7 7" stroke="currentColor" /></svg>
        </button>
      </div>
    </header>
    <div className="h-[16px] shrink-0 flex text-center text-[#3c3c3c]">
      <button className="w-[38px] bg-[#5d5857] text-white">Fichier</button>
      <button className="w-[42px] bg-[#f5f6f7] border-x border-[#e3e5e7]">Accueil</button>
      <button className="w-[46px]">Partage</button>
      <button className="w-[52px]">Affichage</button>
    </div>
    <Ribbon historyDim={active} />
    <AddressBar crumbs={crumbs} canForward={!active} />
    <div className="flex-1 min-h-0 flex">
      <NavPane selected={navSelected} />
      <FileTable files={files} selected={selected} active={active} />
    </div>
    <footer className="h-[15px] shrink-0 flex items-center gap-[15px] pl-[9px] text-[#2b4a6b]">
      {status.map((s) => (
        <span key={s}>{s}</span>
      ))}
    </footer>
  </section>
);

const WinRar = () => (
  <svg viewBox="0 0 12 12" className="w-[11px] h-[12px]">
    <rect x="1" y=".3" width="10.500" height="3.600" fill="#b32452" />
    <rect x="1" y="4.200" width="10.500" height="3.600" fill="#2c4fae" />
    <rect x="1" y="8.100" width="10.500" height="3.600" fill="#1f8a42" />
    <path d="M0 4h12M0 8h12M1 0v12M0 11.700h12" stroke="#15181c" />
    <path d="M5 0h1.500v12H5z" fill="#8f7540" />
  </svg>
);
const Panda = ({ className = "w-[10px] h-[10px]" }) => (
  <svg viewBox="0 0 12 12" className={className}>
    <circle cx="6" cy="6" r="5.800" fill="#8fdcf0" />
    <path d="M4 .6A5.800 5.800 0 1 1 6 11.800C8 9 9 5 4 .6z" fill="#1d4f96" />
    <path d="M1 5c3-1 5 1 4 6.500C2 10.500.5 8 1 5z" fill="#fff" />
    <path d="M6 1l2 3-3-1z" fill="#46b6e0" />
  </svg>
);
const Broom = () => (
  <svg viewBox="0 0 11 11" className="w-[10px] h-[10px]">
    <path d="M3 4h7v6.500H3z" fill="#cfc7a4" />
    <path d="M2 2.500l2 2.500 4 3-1 2.500-6 .2z" fill="#e3c02c" />
    <path d="M1 .5l2.500 4" stroke="#8c7b2a" />
  </svg>
);
const SmallCone = () => <Cone className="w-[10px] h-[10px]" />;

const menu = [
  [
    { label: "Ouvrir", bold: true },
    { label: "Ouvrir dans une nouvelle fenêtre" },
    { label: "Épingler à Accès rapide" },
    { label: "Shred with BleachBit", Icon: Broom },
    { label: "Ajouter à la liste de lecture de VLC", Icon: SmallCone },
    { label: "Ouvrir en tant que bloc-notes dans OneNote" },
    { label: "Lire avec VLC", Icon: SmallCone },
    { label: "7-Zip", sub: true },
    { label: "CRC SHA", sub: true },
  ],
  [
    { label: "Accorder l'accès à", sub: true },
    { label: "Analyser avec Panda Dome", Icon: Panda },
    { label: "Ajouter à l'archive...", Icon: WinRar },
    { label: 'Ajouter à "v1.2 copilote dominique complet avec update v1.37.0.rar"', Icon: WinRar },
    { label: "Compresser et envoyer par e-mail...", Icon: WinRar },
    { label: 'Compresser dans "v1.2 copil...let avec update v1.37.0.rar" et envoyer par e-mail', Icon: WinRar },
  ],
  [{ label: "Envoyer vers", sub: true }],
  [{ label: "Couper" }, { label: "Copier" }, { label: "Coller" }],
  [{ label: "Créer un raccourci" }, { label: "Supprimer" }, { label: "Renommer" }],
  [{ label: "Propriétés" }],
];

const ContextMenu = () => (
  <div
    role="menu"
    className="absolute left-[863px] top-[219px] w-[351px] h-[366px] flex flex-col px-[6px] py-[2px] bg-[#eeeeee] border border-[#a0a0a0] text-[#1a1a1a] shadow-[2px_2px_1px_#00000070]"
  >
    {menu.flatMap((group, g) => [
      g > 0 && (
        <div key={`sep${g}`} role="separator" className="h-[5px] flex items-center">
          <span className="w-full border-t border-[#a2a2a2]" />
        </div>
      ),
      ...group.map(({ label, Icon, bold, sub }) => (
        <button key={label} role="menuitem" className={clsx("flex-1 min-h-0 flex items-center text-left", bold && "font-bold")}>
          <span className="w-[13px] mr-[3px] flex justify-center">{Icon && <Icon />}</span>
          <span className="flex-1 whitespace-nowrap">{label}</span>
          {sub && <Chevron thin className="w-[9px] h-[9px] -rotate-90" />}
        </button>
      )),
    ])}
  </div>
);

const Pointer = () => (
  <svg viewBox="0 0 9 13" className="absolute left-[903px] top-[451px] w-[9px] h-[13px]">
    <path d="M.5.7v10.500l2.400-2.200 1.600 3.500 1.600-.7-1.600-3.400h3.400z" fill="#fff" stroke="#333" strokeWidth=".8" />
  </svg>
);

// taskbar icons
const WindowsLogo = () => (
  <svg viewBox="0 0 12 12" className="w-3 h-3">
    <path d="M0 1.700l5-.7v4.700H0zM5.600.9 12 0v5.700H5.600zM0 6.300h5V11l-5-.7zM5.600 6.300H12V12l-6.400-.9z" fill="#fff" />
  </svg>
);
const SearchIcon = () => (
  <svg viewBox="0 0 12 12" className="w-3 h-3">
    <circle cx="7.300" cy="4.500" r="3.700" fill="none" stroke="#ddd" strokeWidth="1.100" />
    <path d="M4.700 7.300.8 11.500" stroke="#ddd" strokeWidth="1.300" />
  </svg>
);
const TaskView = () => (
  <svg viewBox="0 0 12 12" className="w-3 h-3">
    <path d="M.5 0v2h7V0M.5 12v-2h7v2M.5 4h7v4h-7zM10.500 0v12" fill="none" stroke="#ccc" />
    <rect x="9.500" y="3.500" width="2" height="2" fill="#fff" />
  </svg>
);
const Gears = () => (
  <svg viewBox="0 0 12 12" className="w-3 h-3">
    <circle cx="4.800" cy="4.800" r="3" fill="none" stroke="#cfe4f0" strokeWidth="2.200" />
    <circle cx="9" cy="9" r="2" fill="none" stroke="#6fb1d4" strokeWidth="1.600" />
  </svg>
);
const Scanner = () => (
  <svg viewBox="0 0 12 12" className="w-3 h-3">
    <path d="M1 1.500h9l1 1.500H2z" fill="#b99b4c" />
    <path d="M3 4h7l2 4H2z" fill="#8a8f8c" />
    <rect x="2" y="8" width="10" height="2.500" fill="#ddd" />
  </svg>
);
const Gear = () => (
  <svg viewBox="0 0 12 12" className="w-3 h-3">
    <circle cx="6" cy="6" r="4" fill="none" stroke="#fff" strokeWidth="1.600" strokeDasharray="1.700 1.440" />
    <circle cx="6" cy="6" r="2.800" fill="none" stroke="#fff" strokeWidth="1.300" />
  </svg>
);
const ExplorerIcon = () => (
  <svg viewBox="0 0 12 11" className="w-3 h-[11px]">
    <path d="M0 .5h4.500L6 2h6v8.500H0z" fill="#f6d06a" />
    <path d="M0 3.500h12v7H0z" fill="#fbe08f" />
    <path d="M2 6h8v4.500H8V8.500H4v2H2z" fill="#3f8fc0" />
  </svg>
);
const Paint = () => (
  <svg viewBox="0 0 12 12" className="w-3 h-3">
    <ellipse cx="5.500" cy="7" rx="5.300" ry="4" fill="#dfe7ee" />
    <path d="M5 5l6-4 1 1.500-4 4z" fill="#d9482f" />
    <circle cx="3.500" cy="6" r="1.200" fill="#c8493a" />
    <path d="M6 10c2 1 4 0 5-2l-3-1z" fill="#3a7ec8" />
  </svg>
);

const taskButtons = [
  { name: "Démarrer", Icon: WindowsLogo },
  { name: "Rechercher", Icon: SearchIcon },
  { name: "Affichage des tâches", Icon: TaskView },
  { name: "Programme", Icon: ExeIcon },
  { name: "Services", Icon: Gears },
  { name: "Bloc-notes", Icon: DatIcon },
  { name: "Scanner", Icon: Scanner },
  { name: "Paramètres", Icon: Gear },
  { name: "Explorateur", Icon: ExplorerIcon, active: true },
  { name: "Capture", Icon: Paint },
  { name: "Rallysimfans", Icon: Rally, running: true },
];

const Tray = () => (
  <div className="ml-auto flex items-center gap-[5px] text-white">
    <svg viewBox="0 0 11 11" className="w-[11px] h-[11px]">
      <path d="M2 7.500 5.500 4 9 7.500" fill="none" stroke="#fff" />
    </svg>
    <svg viewBox="0 0 11 11" className="w-[11px] h-[11px]">
      <path d="M1 9c-.5-3 0-5 1-6.500h7c1 1.500 1.500 3.500 1 6.500H8L7 8H4L3 9z" fill="#fff" />
      <circle cx="3.900" cy="5.800" r=".9" fill="#222" />
      <circle cx="7.100" cy="5.800" r=".9" fill="#222" />
      <circle cx="9" cy="2" r="2" fill="#e33b3b" />
    </svg>
    <svg viewBox="0 0 11 11" className="w-[11px] h-[11px]">
      <rect x="1" y="2" width="9" height="7.500" fill="#26361a" />
      <path d="M2 5.500C4 2.500 7 3 8.500 5.500 7 8 4 8 2 5.500z" fill="none" stroke="#6f9a2c" />
      <circle cx="5.500" cy="5.500" r="1.200" fill="#9ed430" />
    </svg>
    <Panda className="w-[11px] h-[11px]" />
    <svg viewBox="0 0 11 11" className="w-[11px] h-[11px]">
      <path d="M2 1c-1 4 2 8 6.500 7.500z" fill="#bbb" />
      <path d="M5 5l3-3M7 1l2.500 2.500M3 7l-1.500 3.500h4" fill="none" stroke="#ccc" strokeWidth=".8" />
    </svg>
    <svg viewBox="0 0 11 11" className="w-[11px] h-[11px]">
      <path d="M4 .5h3V3H4zM3 3h5v7.500H3z" fill="none" stroke="#eee" />
      <path d="M8 10.500h2.500" stroke="#eee" />
    </svg>
    <svg viewBox="0 0 11 11" className="w-[11px] h-[11px]">
      <path d="M3 2h7.500v5.500H3zM6.500 7.500v2M4 10h6M1.500 .5v9M0 4h3" fill="none" stroke="#eee" />
    </svg>
    <svg viewBox="0 0 11 11" className="w-[11px] h-[11px]">
      <path d="M.5 4h2L5 1.500v8L2.500 7h-2z" fill="none" stroke="#eee" strokeWidth=".9" />
      <path d="M6.500 4c.7 1 .7 2 0 3M8 2.500c1.300 2 1.300 4 0 6M9.500 1.500c1.500 2.500 1.500 5.500 0 8" fill="none" stroke="#eee" strokeWidth=".9" />
    </svg>
    <div className="flex items-center gap-[2px]">
      <time>11:28</time>
      <span className="h-5 w-[3px] border-l border-[#555]" />
    </div>
  </div>
);

const Taskbar = () => (
  <footer className="relative h-5 shrink-0 flex bg-[#101010]">
    <div className="flex w-[271px]">
      {taskButtons.map(({ name, Icon, active, running }) => (
        <button
          key={name}
          aria-label={name}
          className={clsx("flex-1 h-5 flex flex-col items-center", active && "bg-[#373737]")}
        >
          <span className="flex-1 w-3 pt-[1px] flex items-center justify-center [&>svg]:max-w-full [&>svg]:max-h-3">
            <Icon />
          </span>
          {(active || running) && (
            <span className={clsx("h-[2px] bg-[#c9c9c9]", active ? "w-full" : "w-[19px]")} />
          )}
        </button>
      ))}
    </div>
    <Tray />
  </footer>
);

const App = () => {
  return (
    <main className="h-screen flex flex-col overflow-hidden bg-black font-['Lato',sans-serif] text-[8px] leading-[12px] select-none">
      <div className="relative flex-1 min-h-0 overflow-hidden">
        <Wallpaper />
        <div className="relative grid grid-cols-[repeat(20,64px)] auto-rows-[68px]">
          {desktopIcons.map(({ col, row, label, Icon, link }) => (
            <button
              key={`${col}-${row}`}
              style={{ gridColumn: col, gridRow: row }}
              className="pt-[4px] flex flex-col items-center"
            >
              <span className="relative h-8 w-8">
                <Icon />
                {link && <Shortcut />}
              </span>
              <span className="mt-[3px] leading-[10px] whitespace-pre text-center text-white [text-shadow:0_1px_2px_#000]">
                {label}
              </span>
            </button>
          ))}
        </div>
        <PacenotesApp />
        <Explorer
          className="left-[115px] top-[49px]"
          title="G:\RSF"
          crumbs={["Ce PC", "Asus (G:)", "RSF"]}
          files={rsfFiles}
          selected={[13]}
          navSelected={21}
          status={["86 élément(s)", "1 élément sélectionné"]}
        />
        <Explorer
          active
          className="left-[725px] top-[66px] shadow-[0_0_8px_#00000090]"
          title="C:\Users\dominique\Desktop\v1.2 copilote dominique complet avec update v1.37.0"
          crumbs={["v1.2 copilote dominique complet avec update v1.37.0"]}
          files={copiloteFiles}
          selected={[0, 1]}
          navSelected={0}
          status={["2 élément(s)", "2 éléments sélectionnés"]}
        />
        <ContextMenu />
        <Pointer />
      </div>
      <Taskbar />
    </main>
  );
};

export default App;
